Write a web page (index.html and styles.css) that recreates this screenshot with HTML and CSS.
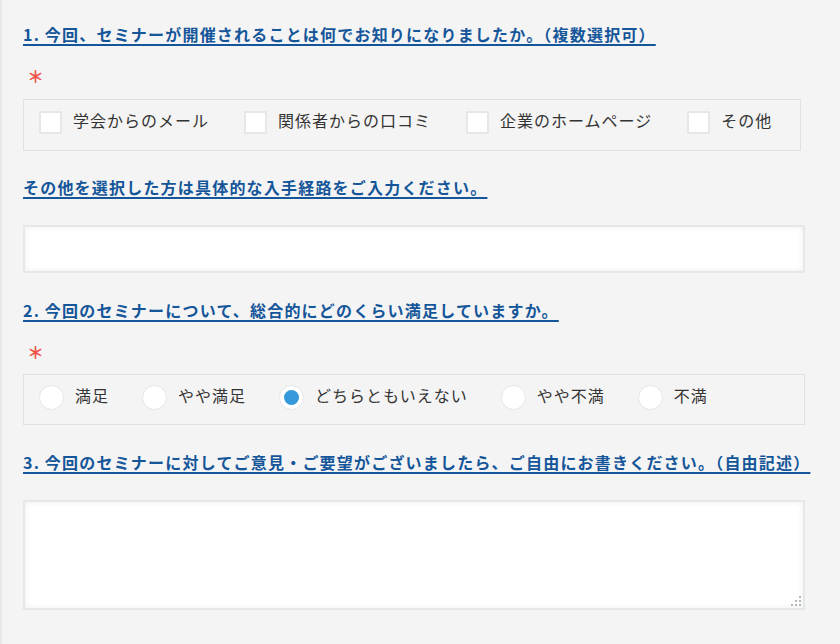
FILE: index.html
```html
<!DOCTYPE html>
<html lang="ja">
<head>
<meta charset="utf-8">
<link rel="stylesheet" href="styles.css">
</head>
<body>
<div class="page">
  <form class="form">
    <p class="q-title q1">1. 今回、セミナーが開催されることは何でお知りになりましたか。（複数選択可）</p>
    <div class="req req1">＊</div>
    <div class="choices checks">
      <label class="opt"><span class="box"></span><span class="txt">学会からのメール</span></label>
      <label class="opt"><span class="box"></span><span class="txt">関係者からの口コミ</span></label>
      <label class="opt"><span class="box"></span><span class="txt">企業のホームページ</span></label>
      <label class="opt"><span class="box"></span><span class="txt">その他</span></label>
    </div>
    <p class="q-title q-other">その他を選択した方は具体的な入手経路をご入力ください。</p>
    <div class="field input"></div>
    <p class="q-title q2">2. 今回のセミナーについて、総合的にどのくらい満足していますか。</p>
    <div class="req req2">＊</div>
    <div class="choices radios">
      <label class="opt"><span class="radio"></span><span class="txt">満足</span></label>
      <label class="opt"><span class="radio"></span><span class="txt">やや満足</span></label>
      <label class="opt"><span class="radio on"></span><span class="txt">どちらともいえない</span></label>
      <label class="opt"><span class="radio"></span><span class="txt">やや不満</span></label>
      <label class="opt"><span class="radio"></span><span class="txt">不満</span></label>
    </div>
    <p class="q-title q3">3. 今回のセミナーに対してご意見・ご要望がございましたら、ご自由にお書きください。（自由記述）</p>
    <div class="field textarea">
      <svg class="grip" width="12" height="12" viewBox="0 0 12 12">
        <rect x="9" y="1" width="2" height="2" fill="#b3b8bd"/>
        <rect x="5" y="5" width="2" height="2" fill="#b3b8bd"/>
        <rect x="9" y="5" width="2" height="2" fill="#b3b8bd"/>
        <rect x="1" y="9" width="2" height="2" fill="#b3b8bd"/>
        <rect x="5" y="9" width="2" height="2" fill="#b3b8bd"/>
        <rect x="9" y="9" width="2" height="2" fill="#b3b8bd"/>
      </svg>
    </div>
  </form>
</div>
</body>
</html>
```

FILE: styles.css
```css
html, body {
  margin: 0;
  padding: 0;
  background: #f4f4f4;
}
body {
  font-family: "Noto Sans CJK JP", "Noto Sans", sans-serif;
  color: #333;
}
.page {
  height: 644px;
  border-left: 2px solid #e8e8e8;
  box-sizing: border-box;
  padding: 22px 0 0 21px;
  overflow: hidden;
}
.form {
  width: 782px;
  display: flex;
  flex-direction: column;
  align-items: flex-start;
}
.q-title {
  margin: 0;
  font-size: 16px;
  line-height: 24px;
  font-weight: bold;
  letter-spacing: 1.2px;
  color: #15569a;
  text-decoration: underline;
  text-underline-offset: 3px;
  text-decoration-thickness: 2px;
  white-space: nowrap;
}
.q-other { margin-top: 24px; }
.q2 { margin-top: 25px; }
.q3 { margin-top: 25px; }
.req {
  margin: 20px 0 0 4px;
  height: 20px;
  line-height: 20px;
  font-size: 17px;
  font-weight: bold;
  color: #ef5148;
}
.req2 { margin-top: 20px; }
.choices {
  margin-top: 13px;
  box-sizing: border-box;
  border: 1px solid #e0e0e0;
  display: flex;
  align-items: center;
  padding: 0 15px 5px;
  height: 52px;
}
.checks { width: 778px; }
.radios { width: 782px; height: 51px; margin-top: 12px; }
.opt {
  display: flex;
  align-items: center;
  font-size: 16px;
  letter-spacing: 1px;
  color: #333;
  white-space: nowrap;
}
.txt {
  padding-bottom: 5px;
}
.checks .opt { margin-right: 35px; }
.radios .opt { margin-right: 33px; }
.box {
  width: 23px;
  height: 23px;
  box-sizing: border-box;
  background: #fff;
  border: 2px solid #e7e7e7;
  margin-right: 11px;
  flex: none;
}
.radio {
  width: 25px;
  height: 25px;
  box-sizing: border-box;
  border-radius: 50%;
  background: #fff;
  border: 1px solid #e6e6e6;
  margin-right: 11px;
  flex: none;
  display: flex;
  align-items: center;
  justify-content: center;
}
.radio.on::after {
  content: "";
  width: 15px;
  height: 15px;
  border-radius: 50%;
  background: #3498db;
}
.field {
  width: 782px;
  box-sizing: border-box;
  background: #fff;
  border: 2px solid #e5e8e8;
  box-shadow: inset 0 0 6px rgba(0, 0, 0, 0.07);
}
.input {
  height: 48px;
  margin-top: 26px;
}
.textarea {
  height: 110px;
  margin-top: 26px;
  position: relative;
}
.grip {
  position: absolute;
  right: 1px;
  bottom: 1px;
}
```
